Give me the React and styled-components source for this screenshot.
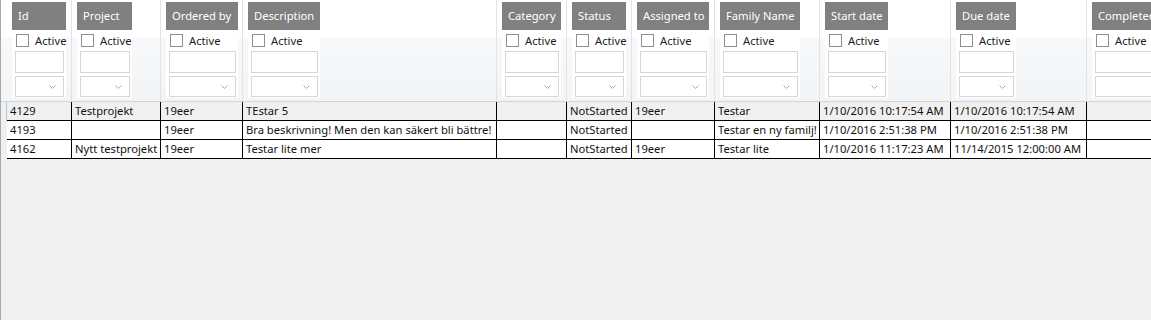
import React from "react";
import styled, { createGlobalStyle } from "styled-components";

const GlobalStyle = createGlobalStyle`
  html, body {
    margin: 0;
    padding: 0;
    background: #f0f0f0;
    overflow: hidden;
  }
  body {
    font-family: "Noto Sans", "Segoe UI", sans-serif;
    font-size: 11.2px;
    color: #111;
  }
`;

const columns = [
  { key: "id", title: "Id", width: 65, head: 54 },
  { key: "project", title: "Project", width: 89, head: 55 },
  { key: "orderedBy", title: "Ordered by", width: 82, head: 72 },
  { key: "description", title: "Description", width: 254, head: 72 },
  { key: "category", title: "Category", width: 70, head: 59 },
  { key: "status", title: "Status", width: 65, head: 54 },
  { key: "assigned", title: "Assigned to", width: 83, head: 72 },
  { key: "family", title: "Family Name", width: 105, head: 80 },
  { key: "start", title: "Start date", width: 131, head: 63 },
  { key: "due", title: "Due date", width: 136, head: 60 },
  { key: "completed", title: "Completed", width: 160, head: 76 },
];

const rows = [
  {
    id: "4129",
    project: "Testprojekt",
    orderedBy: "19eer",
    description: "TEstar 5",
    category: "",
    status: "NotStarted",
    assigned: "19eer",
    family: "Testar",
    start: "1/10/2016 10:17:54 AM",
    due: "1/10/2016 10:17:54 AM",
    completed: "",
  },
  {
    id: "4193",
    project: "",
    orderedBy: "19eer",
    description: "Bra beskrivning! Men den kan säkert bli bättre!",
    category: "",
    status: "NotStarted",
    assigned: "",
    family: "Testar en ny familj!",
    start: "1/10/2016 2:51:38 PM",
    due: "1/10/2016 2:51:38 PM",
    completed: "",
  },
  {
    id: "4162",
    project: "Nytt testprojekt",
    orderedBy: "19eer",
    description: "Testar lite mer",
    category: "",
    status: "NotStarted",
    assigned: "19eer",
    family: "Testar lite",
    start: "1/10/2016 11:17:23 AM",
    due: "11/14/2015 12:00:00 AM",
    completed: "",
  },
];

const Frame = styled.div`
  box-sizing: border-box;
  width: 1151px;
  height: 320px;
  overflow: hidden;
  border-left: 1px solid #a9a9a9;
  background: #f0f0f0;
`;

const HeaderRow = styled.div`
  display: flex;
  box-sizing: border-box;
  height: 102px;
  width: max-content;
  border-bottom: 1px solid #d5d5d5;
  background: linear-gradient(
    to bottom,
    #ffffff 0,
    #ffffff 38px,
    #f7f8f9 38px,
    #f3f4f6 100%
  );
`;

const Corner = styled.div`
  flex: none;
  width: 6px;
`;

const HeaderCell = styled.div`
  flex: none;
  box-sizing: border-box;
  width: ${(p) => p.$w}px;
  padding: 2px 0 0 5px;
  border-right: 1px solid #e2e3e6;
  overflow: hidden;
`;

const HeaderStack = styled.div`
  display: flex;
  flex-direction: column;
  width: ${(p) => p.$w}px;
  background: #ffffff;
  padding-bottom: 1px;
`;

const HeaderLabel = styled.div`
  height: 28px;
  line-height: 28px;
  padding: 0 6px;
  background: #808080;
  color: #ffffff;
  white-space: nowrap;
  overflow: hidden;
`;

const FilterPanel = styled.div`
  display: flex;
  flex-direction: column;
  padding: 0 2px 0 3px;
`;

const CheckRow = styled.label`
  display: flex;
  align-items: center;
  gap: 6px;
  height: 13px;
  margin: 4px 0 0 1px;
  color: #1e1e1e;
  white-space: nowrap;
`;

const CheckBox = styled.span`
  flex: none;
  box-sizing: border-box;
  width: 13px;
  height: 13px;
  border: 1px solid #8e8f8f;
  background: #ffffff;
`;

const TextBox = styled.div`
  box-sizing: border-box;
  height: 22px;
  margin-top: 4px;
  border: 1px solid #d6d6d6;
  background: #ffffff;
`;

const Combo = styled.div`
  box-sizing: border-box;
  height: 21px;
  margin-top: 3px;
  border: 1px solid #d6d6d6;
  background: #ffffff;
  display: flex;
  align-items: center;
  justify-content: flex-end;
  padding-right: 7px;
`;

const Row = styled.div`
  display: flex;
  height: 19px;
  width: max-content;
`;

const RowHeader = styled.div`
  flex: none;
  box-sizing: border-box;
  width: 6px;
  background: #f0f0f0;
  border-right: 1px solid ${(p) => (p.$current ? "#9ccbef" : "#f0f0f0")};
`;

const RowCells = styled.div`
  display: flex;
  box-sizing: border-box;
  border-bottom: 1px solid #000000;
  background: ${(p) => (p.$current ? "#f0f0f0" : "#ffffff")};
`;

const Cell = styled.div`
  flex: none;
  box-sizing: border-box;
  width: ${(p) => p.$w}px;
  padding-left: 3px;
  line-height: 18px;
  border-right: 1px solid #000000;
  white-space: nowrap;
  overflow: hidden;
`;

function Chevron() {
  return (
    <svg width="7" height="4" viewBox="0 0 7 4">
      <path d="M0.5 0.5 L3.5 3.5 L6.5 0.5" fill="none" stroke="#a8a8a8" strokeWidth="1" />
    </svg>
  );
}

export default function App() {
  return (
    <>
      <GlobalStyle />
      <Frame>
        <HeaderRow>
          <Corner />
          {columns.map((c) => (
            <HeaderCell key={c.key} $w={c.width}>
              <HeaderStack $w={c.head}>
                <HeaderLabel>{c.title}</HeaderLabel>
                <FilterPanel>
                  <CheckRow>
                    <CheckBox />
                    Active
                  </CheckRow>
                  <TextBox />
                  <Combo>
                    <Chevron />
                  </Combo>
                </FilterPanel>
              </HeaderStack>
            </HeaderCell>
          ))}
        </HeaderRow>
        {rows.map((r, ri) => (
          <Row key={r.id}>
            <RowHeader $current={ri === 0} />
            <RowCells $current={ri === 0}>
              {columns.map((c) => (
                <Cell key={c.key} $w={c.width}>
                  {r[c.key]}
                </Cell>
              ))}
            </RowCells>
          </Row>
        ))}
      </Frame>
    </>
  );
}
